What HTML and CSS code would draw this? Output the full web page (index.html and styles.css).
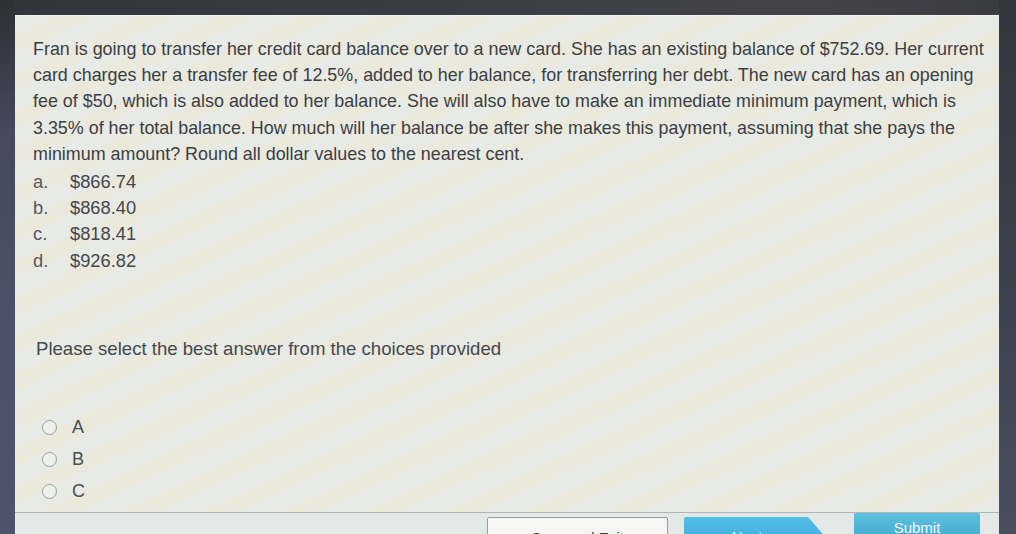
FILE: index.html
```html
<!DOCTYPE html>
<html lang="en">
<head>
<meta charset="utf-8">
<title>Question</title>
<link rel="stylesheet" href="styles.css">
</head>
<body>
<div class="screen">
  <div class="rail"></div>
  <div class="main">
    <div class="topbar"></div>
    <div class="panel">
      <div class="content">
        <p class="question">Fran is going to transfer her credit card balance over to a new card. She has an existing balance of $752.69. Her current card charges her a transfer fee of 12.5%, added to her balance, for transferring her debt. The new card has an opening fee of $50, which is also added to her balance. She will also have to make an immediate minimum payment, which is 3.35% of her total balance. How much will her balance be after she makes this payment, assuming that she pays the minimum amount? Round all dollar values to the nearest cent.</p>
        <ol class="choices">
          <li><span class="key">a.</span><span>$866.74</span></li>
          <li><span class="key">b.</span><span>$868.40</span></li>
          <li><span class="key">c.</span><span>$818.41</span></li>
          <li><span class="key">d.</span><span>$926.82</span></li>
        </ol>
        <p class="prompt">Please select the best answer from the choices provided</p>
        <div class="radios">
          <label class="radio"><span class="dot"></span>A</label>
          <label class="radio"><span class="dot"></span>B</label>
          <label class="radio"><span class="dot"></span>C</label>
          <label class="radio"><span class="dot"></span>D</label>
        </div>
      </div>
      <div class="footer">
        <button class="btn save">Save and Exit</button>
        <button class="btn next">Next</button>
        <button class="btn submit">Submit</button>
      </div>
    </div>
  </div>
  <div class="edge"></div>
</div>
</body>
</html>
```
FILE: styles.css
```css
* { box-sizing: border-box; }
html, body { margin: 0; padding: 0; }
body {
  width: 1016px;
  height: 534px;
  overflow: hidden;
  background: #3a3c44;
  font-family: "Liberation Sans", Arial, sans-serif;
}
.screen {
  display: flex;
  height: 534px;
}
.rail {
  width: 15px;
  flex: none;
  background: linear-gradient(180deg, #2e3036 0%, #454a5c 25%, #4b5269 60%, #4d546c 100%);
}
.main {
  width: 984px;
  flex: none;
  display: flex;
  flex-direction: column;
}
.topbar {
  height: 15px;
  flex: none;
  background: linear-gradient(90deg, #33353c 0%, #3c3e46 50%, #444448 80%, #3b3c42 100%);
}
.edge {
  flex: 1;
  background: linear-gradient(180deg, #34363d 0%, #3f4250 60%, #4a4f60 100%);
}
.panel {
  flex: 1;
  overflow: hidden;
  display: flex;
  flex-direction: column;
  background:
    repeating-linear-gradient(155deg, rgba(240, 232, 200, 0.0) 0 18px, rgba(240, 230, 196, 0.28) 18px 34px),
    #e8eae5;
  border-top: 1px solid #f2f3ef;
}
.content {
  height: 496px;
  flex: none;
  overflow: hidden;
  padding: 20px 6px 0 18px;
  color: #3b3e44;
}
.question {
  margin: 0;
  font-size: 17.9px;
  line-height: 26.2px;
}
.choices {
  list-style: none;
  margin: 2px 0 0 0;
  padding: 0;
  font-size: 18.3px;
  line-height: 26.2px;
  color: #44474c;
}
.choices li { display: flex; }
.key { width: 37px; color: #55585d; }
.prompt {
  margin: 62px 0 0 3px;
  font-size: 18.6px;
  line-height: 26px;
  color: #45484e;
}
.radios {
  margin-top: 50px;
  display: flex;
  flex-direction: column;
}
.radio {
  height: 32px;
  display: flex;
  align-items: center;
  gap: 15px;
  padding-left: 9px;
  font-size: 18px;
  color: #4a4d52;
}
.dot {
  width: 15px;
  height: 15px;
  border-radius: 50%;
  border: 1.5px solid #9a9da0;
  background: #eef0ec;
}
.footer {
  flex: none;
  height: 40px;
  border-top: 1px solid #b3b6b4;
  background: #e4e8e6;
  display: flex;
  align-items: flex-start;
  padding: 4px 0 0 472px;
}
.btn {
  font-family: "Liberation Sans", Arial, sans-serif;
  font-size: 15px;
  height: 34px;
  border-radius: 2px;
  padding: 0;
  margin: 0;
}
.save {
  width: 181px;
  background: #f6f7f5;
  border: 1px solid #9a9d9e;
  color: #3c3f44;
  padding-top: 6px;
}
.next {
  width: 146px;
  margin-left: 16px;
  border: none;
  color: #d9f0f8;
  background: linear-gradient(180deg, #54bde6 0%, #3aa9d9 100%);
  clip-path: polygon(0 0, 85% 0, 100% 75%, 85% 100%, 0 100%);
  padding-top: 4px;
  padding-right: 20px;
}
.submit {
  width: 126px;
  margin-left: 24px;
  margin-top: -4px;
  border: none;
  color: #f2fafc;
  background: linear-gradient(180deg, #5fc0de 0%, #3aa5cc 100%);
  padding-bottom: 6px;
}
```
